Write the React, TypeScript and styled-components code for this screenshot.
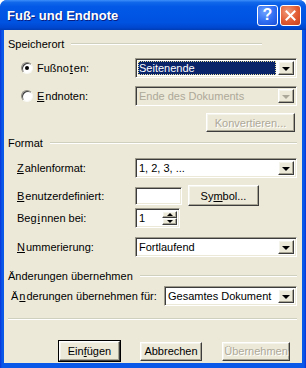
import React from 'react'
import styled, { createGlobalStyle } from 'styled-components'

const GlobalStyle = createGlobalStyle`
  html, body {
    margin: 0;
    padding: 0;
    background: #ffffff;
  }
  body {
    font-family: "Liberation Sans", Arial, sans-serif;
    font-size: 11px;
    color: #000;
  }
`

const Window = styled.div`
  width: 306px;
  height: 368px;
  display: flex;
  flex-direction: column;
  background: #0a4fdc;
  border-radius: 7px 7px 0 0;
  overflow: hidden;
`

const TitleBar = styled.div`
  height: 30px;
  flex: none;
  display: flex;
  align-items: center;
  padding: 0 5px 0 7px;
  gap: 2px;
  background: linear-gradient(
    to bottom,
    #3d8ef9 0%,
    #1168ea 8%,
    #0359e6 22%,
    #0055e4 50%,
    #0052e0 75%,
    #0047cf 92%,
    #003cb4 100%
  );
`

const Title = styled.div`
  flex: 1;
  color: #fff;
  font-weight: bold;
  font-size: 13px;
  text-shadow: 1px 1px 0 #0a1e80;
  padding-top: 1px;
`

const CaptionButton = styled.div<{ $kind: 'help' | 'close' }>`
  width: 21px;
  height: 21px;
  box-sizing: border-box;
  border: 1px solid #fff;
  border-radius: 3px;
  display: flex;
  align-items: center;
  justify-content: center;
  color: #fff;
  font-weight: bold;
  font-size: 16px;
  background: ${(p) =>
    p.$kind === 'help'
      ? 'radial-gradient(circle at 35% 30%, #6fa2ff 0%, #2f6df2 55%, #1b4fd8 100%)'
      : 'radial-gradient(circle at 35% 30%, #f09b7b 0%, #e25b31 55%, #c6401c 100%)'};
`

const Frame = styled.div`
  flex: 1;
  display: flex;
  padding: 0 4px 5px 4px;
  background: linear-gradient(to right, #0831d9 0, #0a58e8 2px, #0a58e8 calc(100% - 2px), #0831d9 100%);
`

const Body = styled.div`
  flex: 1;
  background: #ece9d8;
  display: flex;
  flex-direction: column;
  padding: 7px 5px 0 4px;
`

const GroupHeader = styled.div<{ $top?: number; $lineEnd?: number }>`
  display: flex;
  align-items: center;
  gap: 7px;
  height: 13px;
  margin-top: ${(p) => p.$top ?? 0}px;
  padding-right: ${(p) => p.$lineEnd ?? 0}px;
  &::after {
    content: '';
    flex: 1;
    height: 0;
    border-top: 1px solid #d0d0bf;
    border-bottom: 1px solid #ffffff;
  }
`

const Row = styled.div<{ $top: number; $indent: number; $col?: number; $height?: number }>`
  display: grid;
  grid-template-columns: ${(p) => (p.$col ?? 127) - p.$indent}px 1fr;
  align-items: center;
  margin-top: ${(p) => p.$top}px;
  padding-left: ${(p) => p.$indent}px;
  height: ${(p) => p.$height ?? 20}px;
`

const Label = styled.label`
  display: flex;
  align-items: center;
  gap: 1px;
  white-space: nowrap;
  u {
    text-decoration: underline;
    text-underline-offset: 1px;
  }
`

const Radio = styled.span<{ $checked?: boolean }>`
  width: 12px;
  height: 12px;
  box-sizing: border-box;
  border-radius: 50%;
  background: #fff;
  border: 1px solid;
  border-color: #8d8b82 #f8f8f4 #f8f8f4 #8d8b82;
  box-shadow: inset 1px 1px 0 #404040;
  margin-right: 3px;
  display: flex;
  align-items: center;
  justify-content: center;
  &::after {
    content: '';
    width: 4px;
    height: 4px;
    border-radius: 50%;
    background: ${(p) => (p.$checked ? '#000' : 'transparent')};
  }
`

const Sunken = styled.div<{ $disabled?: boolean; $width?: number }>`
  box-sizing: border-box;
  height: 100%;
  width: ${(p) => (p.$width ? `${p.$width}px` : 'auto')};
  display: flex;
  align-items: stretch;
  background: ${(p) => (p.$disabled ? '#ece9d8' : '#fff')};
  color: ${(p) => (p.$disabled ? '#aca899' : '#000')};
  border: 1px solid;
  border-color: #9d9a8b #ffffff #ffffff #9d9a8b;
  box-shadow: inset 1px 1px 0 #3c3c3c, inset -1px -1px 0 #ece9d8;
  padding: 2px;
`

const FieldText = styled.div<{ $selected?: boolean }>`
  flex: 1;
  display: flex;
  align-items: center;
  padding-left: 1px;
  white-space: nowrap;
  overflow: hidden;
  background: ${(p) => (p.$selected ? '#0a246a' : 'transparent')};
  color: ${(p) => (p.$selected ? '#fff' : 'inherit')};
  outline: ${(p) => (p.$selected ? '1px dotted #e8e0a0' : 'none')};
  outline-offset: -1px;
  margin-right: 2px;
`

const BevelButton = styled.div<{ $disabled?: boolean }>`
  box-sizing: border-box;
  background: #ece9d8;
  border: 1px solid;
  border-color: #ffffff #3c3c3c #3c3c3c #ffffff;
  box-shadow: inset -1px -1px 0 #a8a594, inset 1px 1px 0 #f4f3ec;
  display: flex;
  align-items: center;
  justify-content: center;
  white-space: nowrap;
  color: ${(p) => (p.$disabled ? '#aca899' : '#000')};
`

const ArrowButton = styled(BevelButton)`
  width: 16px;
  &::after {
    content: '';
    border-left: 4px solid transparent;
    border-right: 4px solid transparent;
    border-top: 4px solid ${(p) => (p.$disabled ? '#aca899' : '#000')};
    margin-top: 1px;
  }
`

const SpinColumn = styled.div`
  width: 15px;
  display: flex;
  flex-direction: column;
`

const SpinButton = styled(BevelButton)<{ $dir: 'up' | 'down' }>`
  flex: 1;
  &::after {
    content: '';
    border-left: 3px solid transparent;
    border-right: 3px solid transparent;
    ${(p) =>
      p.$dir === 'up' ? 'border-bottom: 3px solid #000;' : 'border-top: 3px solid #000;'}
  }
`

const PushButton = styled(BevelButton)<{ $width: number; $height?: number; $default?: boolean }>`
  width: ${(p) => p.$width}px;
  height: ${(p) => p.$height ?? (p.$default ? 20 : 19)}px;
  ${(p) =>
    p.$default &&
    `
    outline: 1px solid #000;
    outline-offset: 0;
  `}
  ${(p) =>
    p.$disabled &&
    `
    text-shadow: 1px 1px 0 #ffffff;
  `}
  u {
    text-decoration: underline;
    text-underline-offset: 1px;
  }
`

const RightAligned = styled.div<{ $top: number }>`
  display: flex;
  justify-content: flex-end;
  margin-top: ${(p) => p.$top}px;
  padding-right: 2px;
`

const Inline = styled.div`
  display: flex;
  align-items: center;
  gap: 6px;
  height: 100%;
`

const SmallField = styled(Sunken)`
  height: 18px;
`

const Separator = styled.div<{ $top: number }>`
  margin-top: ${(p) => p.$top}px;
  height: 0;
  border-top: 1px solid #d0d0bf;
  border-bottom: 1px solid #ffffff;
`

const ButtonRow = styled.div<{ $top: number }>`
  display: flex;
  justify-content: flex-end;
  align-items: center;
  gap: 20px;
  margin-top: ${(p) => p.$top}px;
  padding-right: 7px;
`

function Combo({ value, selected, disabled }: { value: string; selected?: boolean; disabled?: boolean }) {
  return (
    <Sunken $disabled={disabled}>
      <FieldText $selected={selected}>{value}</FieldText>
      <ArrowButton $disabled={disabled} />
    </Sunken>
  )
}

export default function App() {
  return (
    <>
      <GlobalStyle />
      <Window>
        <TitleBar>
          <Title>Fuß- und Endnote</Title>
          <CaptionButton $kind="help">?</CaptionButton>
          <CaptionButton $kind="close">
            <svg width="11" height="11" viewBox="0 0 11 11">
              <path d="M1.5 1.5 L9.5 9.5 M9.5 1.5 L1.5 9.5" stroke="#fff" strokeWidth="2" strokeLinecap="square" />
            </svg>
          </CaptionButton>
        </TitleBar>
        <Frame>
          <Body>
            <GroupHeader $lineEnd={35}>Speicherort</GroupHeader>

            <Row $top={8} $indent={13}>
              <Label>
                <Radio $checked />
                Fußno<u>t</u>en:
              </Label>
              <Combo value="Seitenende" selected />
            </Row>
            <Row $top={8} $indent={13}>
              <Label>
                <Radio />
                <u>E</u>ndnoten:
              </Label>
              <Combo value="Ende des Dokuments" disabled />
            </Row>
            <RightAligned $top={7}>
              <PushButton $width={89} $disabled>
                Konvertieren...
              </PushButton>
            </RightAligned>

            <GroupHeader $top={4}>Format</GroupHeader>
            <Row $top={9} $indent={9}>
              <Label>
                <u>Z</u>ahlenformat:
              </Label>
              <Combo value="1, 2, 3, ..." />
            </Row>
            <Row $top={7} $indent={9} $height={21}>
              <Label>
                <u>B</u>enutzerdefiniert:
              </Label>
              <Inline>
                <SmallField $width={47} />
                <PushButton $width={71} $height={21}>
                  Sy<u>m</u>bol...
                </PushButton>
              </Inline>
            </Row>
            <Row $top={2} $indent={9}>
              <Label>
                Beg<u>i</u>nnen bei:
              </Label>
              <Sunken $width={45}>
                <FieldText>1</FieldText>
                <SpinColumn>
                  <SpinButton $dir="up" />
                  <SpinButton $dir="down" />
                </SpinColumn>
              </Sunken>
            </Row>
            <Row $top={9} $indent={9}>
              <Label>
                <u>N</u>ummerierung:
              </Label>
              <Combo value="Fortlaufend" />
            </Row>

            <GroupHeader $top={12}>Änderungen übernehmen</GroupHeader>
            <Row $top={4} $indent={3} $col={156}>
              <Label>
                Ä<u>n</u>derungen übernehmen für:
              </Label>
              <Combo value="Gesamtes Dokument" />
            </Row>

            <Separator $top={12} />

            <ButtonRow $top={21}>
              <PushButton $width={61} $default>
                Ein<u>f</u>ügen
              </PushButton>
              <PushButton $width={62}>Abbrechen</PushButton>
              <PushButton $width={68} $disabled>
                Übernehmen
              </PushButton>
            </ButtonRow>
          </Body>
        </Frame>
      </Window>
    </>
  )
}
